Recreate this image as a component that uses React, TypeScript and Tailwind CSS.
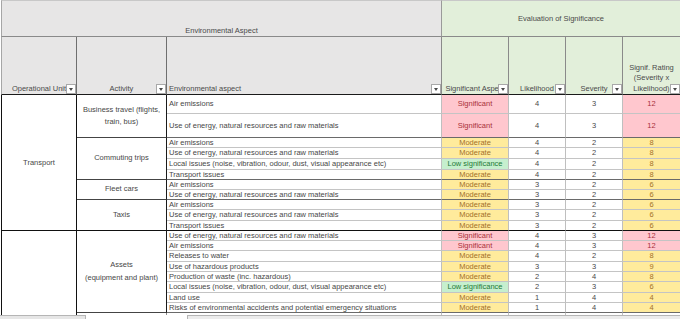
import React from "react";

type Sig = "S" | "M" | "L";
type Row = { a: string; s: Sig; l: number; v: number };
type Group = { act: React.ReactNode; rows: Row[]; end: "black" | "dark" };

const E = "Use of energy, natural resources and raw materials";
const LI = "Local issues (noise, vibration, odour, dust, visual appearance etc)";

const transport: Group[] = [
  {
    act: (
      <>
        Business travel (flights,
        <br />
        train, bus)
      </>
    ),
    end: "dark",
    rows: [
      { a: "Air emissions", s: "S", l: 4, v: 3 },
      { a: E, s: "S", l: 4, v: 3 },
    ],
  },
  {
    act: "Commuting trips",
    end: "dark",
    rows: [
      { a: "Air emissions", s: "M", l: 4, v: 2 },
      { a: E, s: "M", l: 4, v: 2 },
      { a: LI, s: "L", l: 4, v: 2 },
      { a: "Transport issues", s: "M", l: 4, v: 2 },
    ],
  },
  {
    act: "Fleet cars",
    end: "dark",
    rows: [
      { a: "Air emissions", s: "M", l: 3, v: 2 },
      { a: E, s: "M", l: 3, v: 2 },
    ],
  },
  {
    act: "Taxis",
    end: "black",
    rows: [
      { a: "Air emissions", s: "M", l: 3, v: 2 },
      { a: E, s: "M", l: 3, v: 2 },
      { a: "Transport issues", s: "M", l: 3, v: 2 },
    ],
  },
];

const assets: Group = {
  act: (
    <>
      Assets
      <br />
      (equipment and plant)
    </>
  ),
  end: "dark",
  rows: [
    { a: E, s: "S", l: 4, v: 3 },
    { a: "Air emissions", s: "S", l: 4, v: 3 },
    { a: "Releases to water", s: "M", l: 4, v: 2 },
    { a: "Use of hazardous products", s: "M", l: 3, v: 3 },
    { a: "Production of waste (inc. hazardous)", s: "M", l: 2, v: 4 },
    { a: LI, s: "L", l: 2, v: 3 },
    { a: "Land use", s: "M", l: 1, v: 4 },
    { a: "Risks of environmental accidents and potential emergency situations", s: "M", l: 1, v: 4 },
  ],
};

const SIG_CLS: Record<Sig, string> = {
  S: "bg-[#ffc7ce] text-[#a8303a]",
  M: "bg-[#ffeb9c] text-[#a3702a]",
  L: "bg-[#c6efce] text-[#1e7a36]",
};
const SIG_TXT: Record<Sig, string> = {
  S: "Significant",
  M: "Moderate",
  L: "Low significance",
};
const SPAN: Record<number, string> = {
  2: "row-span-2",
  3: "row-span-3",
  4: "row-span-4",
  8: "row-span-8",
};

const Btn = () => (
  <span className="absolute right-0 bottom-0 w-[10px] h-[10px] bg-white border border-[#a8a8a8] flex items-center justify-center">
    <span className="w-0 h-0 border-l-[2px] border-r-[2px] border-t-[3px] border-l-transparent border-r-transparent border-t-[#4a4a4a]" />
  </span>
);

function renderGroup(g: Group, key: string) {
  const n = g.rows.length;
  const out: React.ReactNode[] = [];
  g.rows.forEach((r, i) => {
    const last = i === n - 1;
    const bb = last
      ? g.end === "black"
        ? "border-b-[#111111]"
        : "border-b-[#6a6a6a]"
      : "border-b-[#c4c4c4]";
    if (i === 0) {
      out.push(
        <div
          key={key + "-b"}
          className={`${SPAN[n]} flex items-center justify-center text-center leading-[12.5px] bg-white border-r border-b border-r-[#1a1a1a] ${
            g.end === "black" ? "border-b-[#111111]" : "border-b-[#444444]"
          }`}
        >
          <span>{g.act}</span>
        </div>
      );
    }
    const rating = r.l * r.v;
    out.push(
      <div
        key={key + i + "c"}
        className={`flex items-center pl-[2px] whitespace-nowrap overflow-hidden bg-white border-r border-b border-r-[#bfbfbf] ${bb}`}
      >
        {r.a}
      </div>,
      <div
        key={key + i + "d"}
        className={`flex items-center justify-center whitespace-nowrap overflow-hidden border-r border-b border-r-[#bfbfbf] ${bb} ${SIG_CLS[r.s]}`}
      >
        {SIG_TXT[r.s]}
      </div>,
      <div
        key={key + i + "e"}
        className={`flex items-center justify-center bg-white border-r border-b border-r-[#bfbfbf] ${bb}`}
      >
        {r.l}
      </div>,
      <div
        key={key + i + "f"}
        className={`flex items-center justify-center bg-white border-r border-b border-r-[#bfbfbf] ${bb}`}
      >
        {r.v}
      </div>,
      <div
        key={key + i + "g"}
        className={`flex items-center justify-center border-b ${bb} ${
          rating >= 10 ? "bg-[#ffc7ce] text-[#a8303a]" : "bg-[#ffeb9c] text-[#a3702a]"
        }`}
      >
        {rating}
      </div>
    );
  });
  return out;
}

export default function App() {
  return (
    <div className="w-[680px] h-[319px] overflow-hidden bg-white pl-[1px] font-['Liberation_Sans',Arial,sans-serif] text-[7.5px] text-[#474747]">
      <div className="grid grid-cols-[76px_90px_275px_67px_57px_57px_57px] grid-rows-[37px_58px_19px_24px_10px_11px_11px_10px_10px_10px_10px_11px_10px_10px_10px_11px_10px_10px_11px_10px_10px_2px]">
        {/* Header row 1 */}
        <div className="col-span-3 flex items-end justify-center leading-[10px] bg-[#e7e6e6] text-[#4a4a4a] border-t border-l border-r border-b border-t-[#c8c8c8] border-l-[#a6a6a6] border-r-[#9a9a9a] border-b-[#8a8a8a]">
          Environmental Aspect
        </div>
        <div className="col-span-4 flex items-center justify-center leading-[10px] bg-[#e2efda] text-[#4a4a4a] border-t border-b border-t-[#c8c8c8] border-b-[#8a8a8a]">
          Evaluation of Significance
        </div>

        {/* Header row 2 */}
        <div className="relative flex items-end justify-center leading-[10px] whitespace-nowrap overflow-hidden bg-[#e7e6e6] text-[#4a4a4a] border-l border-r border-b border-l-[#a6a6a6] border-r-[#6f6f6f] border-b-[#1a1a1a]">
          Operational Unit
          <Btn />
        </div>
        <div className="relative flex items-end justify-center leading-[10px] whitespace-nowrap overflow-hidden bg-[#e7e6e6] text-[#4a4a4a] border-r border-b border-r-[#6f6f6f] border-b-[#1a1a1a]">
          Activity
          <Btn />
        </div>
        <div className="relative flex items-end pl-[2px] leading-[10px] whitespace-nowrap overflow-hidden bg-[#e7e6e6] text-[#4a4a4a] border-r border-b border-r-[#8a8a8a] border-b-[#1a1a1a]">
          Environmental aspect
          <Btn />
        </div>
        <div className="relative flex items-end justify-center leading-[10px] whitespace-nowrap overflow-hidden bg-[#e2efda] text-[#4a4a4a] border-r border-b border-r-[#8a8a8a] border-b-[#1a1a1a]">
          Significant Aspect
          <Btn />
        </div>
        <div className="relative flex items-end justify-center leading-[10px] whitespace-nowrap overflow-hidden bg-[#e2efda] text-[#4a4a4a] border-r border-b border-r-[#8a8a8a] border-b-[#1a1a1a]">
          Likelihood
          <Btn />
        </div>
        <div className="relative flex items-end justify-center leading-[10px] whitespace-nowrap overflow-hidden bg-[#e2efda] text-[#4a4a4a] border-r border-b border-r-[#8a8a8a] border-b-[#1a1a1a]">
          Severity
          <Btn />
        </div>
        <div className="relative flex items-end justify-center text-center leading-[10.5px] overflow-hidden bg-[#e2efda] text-[#4a4a4a] border-b border-b-[#1a1a1a]">
          <span>
            Signif. Rating
            <br />
            (Severity x
            <br />
            Likelihood)
          </span>
          <Btn />
        </div>

        {/* Transport */}
        <div className="row-span-11 flex items-center justify-center bg-white border-l border-r border-b border-l-[#111111] border-r-[#111111] border-b-[#111111]">
          Transport
        </div>
        {transport.map((g, gi) => renderGroup(g, "t" + gi))}

        {/* Assets */}
        <div className="row-span-9 bg-white border-l border-r border-l-[#111111] border-r-[#111111]" />
        {renderGroup(assets, "a")}

        {/* partial next row */}
        <div className="bg-white border-r border-r-[#8a8a8a]" />
        <div className="bg-white border-r border-r-[#bfbfbf]" />
        <div className="bg-white border-r border-r-[#bfbfbf]" />
        <div className="bg-white border-r border-r-[#bfbfbf]" />
        <div className="bg-white border-r border-r-[#bfbfbf]" />
        <div className="bg-white" />
      </div>

      {/* bottom scroll strip */}
      <div className="flex h-[4px] -ml-[1px]">
        <div className="w-[86px] bg-[#e6e6e6] border-t border-r border-[#b5b5b5]" />
        <div className="w-[101px] bg-white" />
        <div className="flex-1 bg-[#ececec] border-t border-l border-[#b5b5b5]" />
      </div>
    </div>
  );
}
